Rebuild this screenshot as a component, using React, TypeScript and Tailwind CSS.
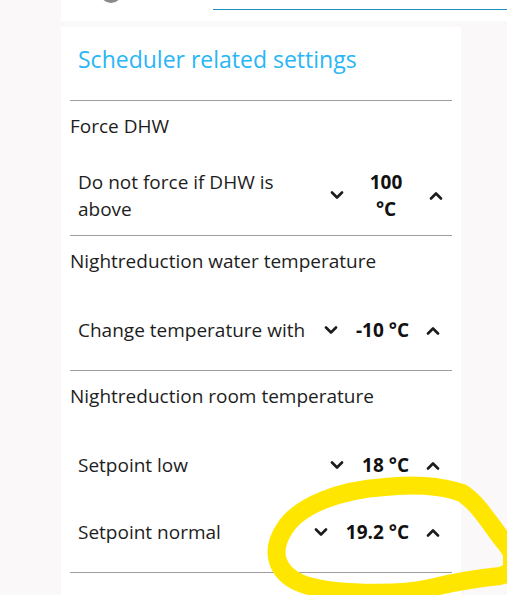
import React from 'react';

type Setting = {
  label: string;
  value: string;
  wrap?: boolean;
};

type Section = {
  title: string;
  rows: Setting[];
};

const sections: Section[] = [
  {
    title: 'Force DHW',
    rows: [{ label: 'Do not force if DHW is above', value: '100 °C', wrap: true }],
  },
  {
    title: 'Nightreduction water temperature',
    rows: [{ label: 'Change temperature with', value: '-10 °C' }],
  },
  {
    title: 'Nightreduction room temperature',
    rows: [
      { label: 'Setpoint low', value: '18 °C' },
      { label: 'Setpoint normal', value: '19.2 °C' },
    ],
  },
];

function Chevron({ up }: { up?: boolean }) {
  return (
    <svg width="14" height="9" viewBox="0 0 14 9" fill="none" className="text-[#1c1c1c]">
      <path
        d={up ? 'M2 7.5L7 2.5L12 7.5' : 'M2 1.5L7 6.5L12 1.5'}
        stroke="currentColor"
        strokeWidth={2.6}
        strokeLinecap="round"
        strokeLinejoin="round"
      />
    </svg>
  );
}

function SettingRow({ label, value, wrap }: Setting) {
  return (
    <div className="flex h-[67px] items-center pl-2">
      <span className={wrap ? 'w-[225px] shrink-0' : 'flex-1'}>{label}</span>
      {wrap && <div className="flex-1" />}
      <button className="flex w-[38px] justify-center">
        <Chevron />
      </button>
      {wrap ? (
        <span className="ml-[6px] mr-[10px] w-[48px] text-center font-bold text-[#111]">{value}</span>
      ) : (
        <span className="ml-[6px] mr-[5px] whitespace-nowrap font-bold text-[#111]">{value}</span>
      )}
      <button className={wrap ? 'flex w-[32px] justify-center' : 'flex w-[38px] justify-center'}>
        <Chevron up />
      </button>
    </div>
  );
}

export default function App() {
  return (
    <div className="relative h-[610px] w-[523px] overflow-hidden bg-white">
      <div
        className="relative flex h-[595px] w-[507px] overflow-hidden bg-[#faf8f9] text-[19px] leading-[27px] text-[#1d1d1d]"
        style={{ fontFamily: '"Open Sans", "Noto Sans", sans-serif' }}
      >
        <div className="w-[61px] shrink-0" />
        <div className="flex flex-1 flex-col">
          <header className="flex h-[21px] shrink-0 items-start bg-white">
            <div className="-mt-[19px] ml-[39px] h-[22px] w-[22px] rounded-full bg-[#8a8a8a]" />
            <div className="ml-[91px] mt-[9px] flex-1 border-t border-[#1a8fbf]" />
          </header>
          <main className="mt-[6px] w-[400px] flex-1 bg-white px-[9px]">
            <h2 className="border-b border-[#a09c9c] pb-[26px] pl-2 pt-[17px] text-[23px] leading-[30px] text-[#29b6f6]">
              Scheduler related settings
            </h2>
            {sections.map((s) => (
              <section key={s.title} className="border-b border-[#a09c9c] pb-[6px]">
                <div className="pb-[22px] pt-[11px] leading-[28px]">{s.title}</div>
                {s.rows.map((r) => (
                  <SettingRow key={r.label} {...r} />
                ))}
              </section>
            ))}
          </main>
        </div>
        {/* highlighter scribble drawn over the screenshot */}
        <svg className="pointer-events-none absolute inset-0" width="507" height="595" viewBox="0 0 507 595">
          <g fill="none" stroke="#ffe600" strokeWidth={18} strokeLinecap="round" strokeLinejoin="round">
            <path d="M500 576C518 572 516 556 505 543C490 524 478 503 462 493C440 485 410 484 385 487C340 490 300 505 285 528C270 550 275 572 300 583C330 595 400 595 430 588C455 582 480 578 500 576" />
            <path d="M512 542L512 576" />
          </g>
        </svg>
      </div>
    </div>
  );
}
